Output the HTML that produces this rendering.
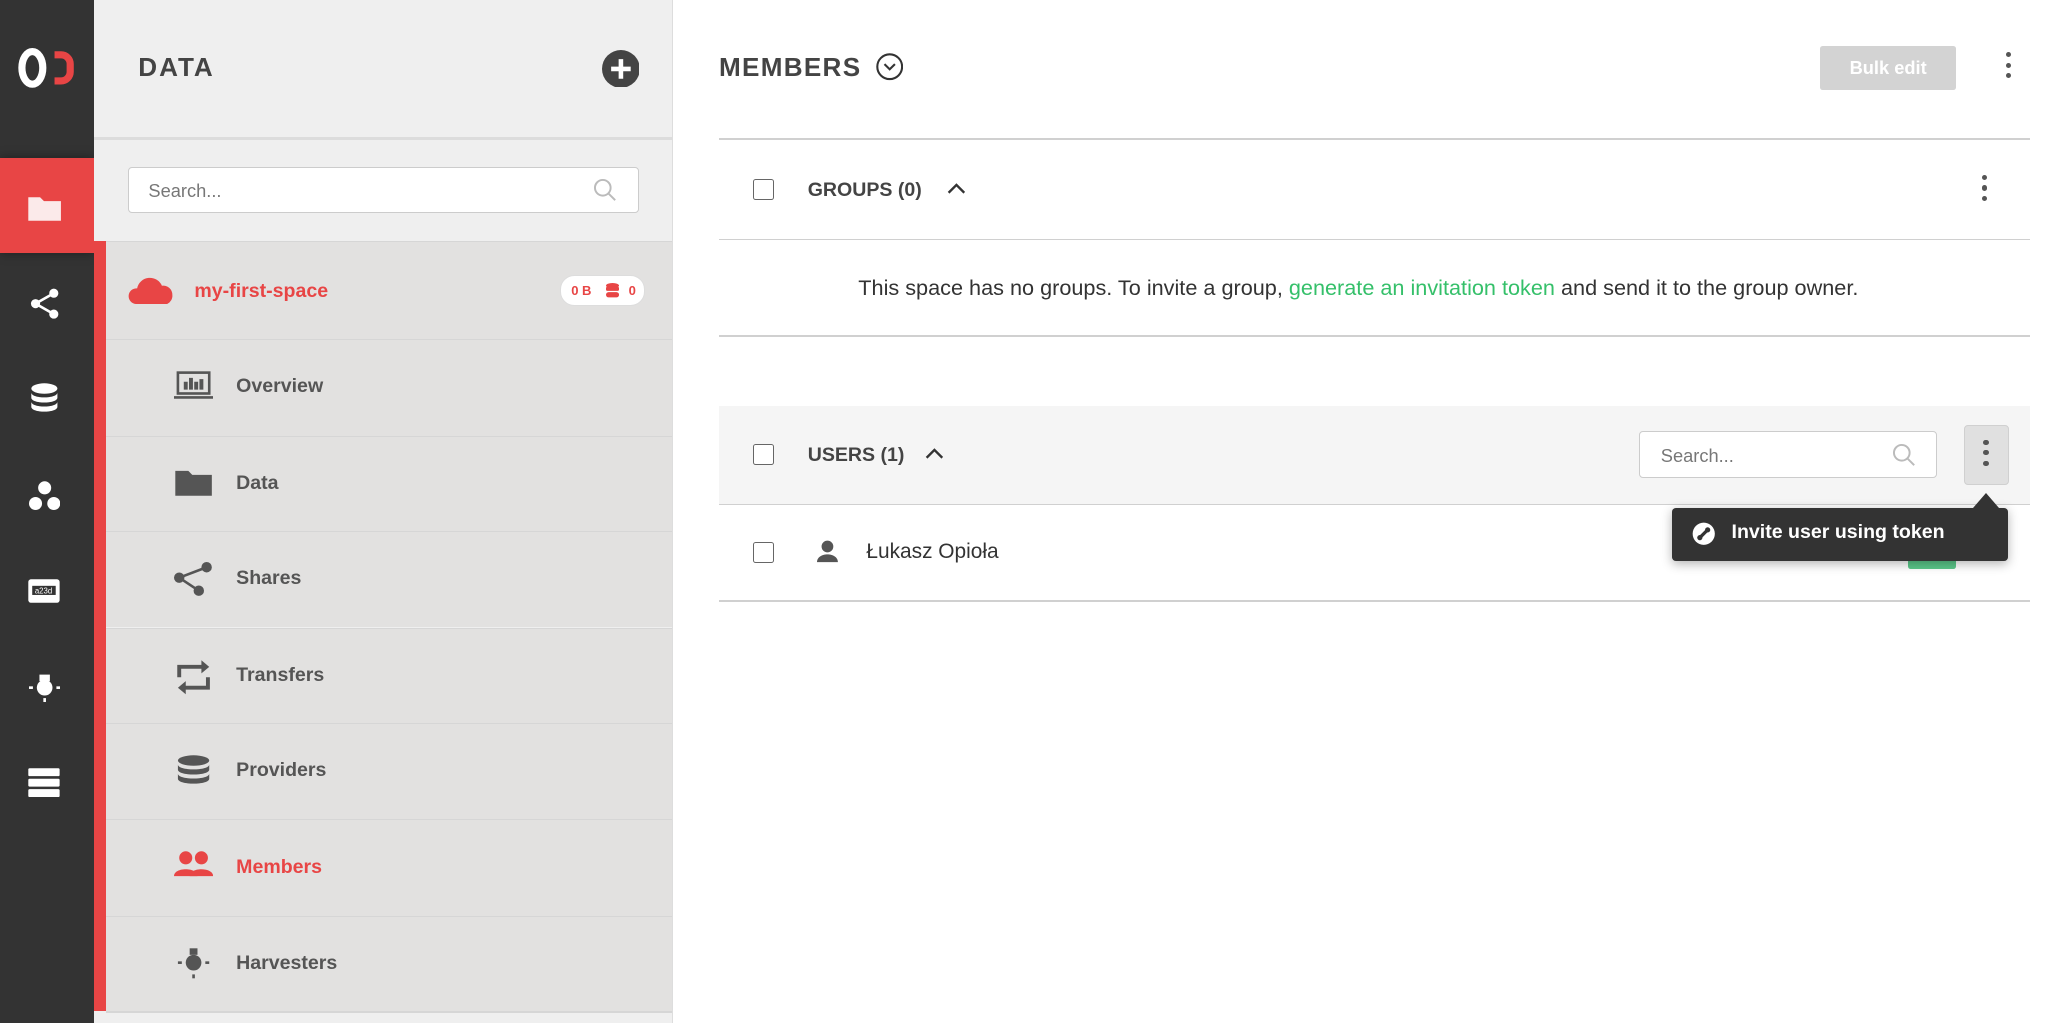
<!DOCTYPE html>
<html><head><meta charset="utf-8"><style>
html,body{margin:0;padding:0;overflow:hidden}
body{width:1568px;height:784px;zoom:1.30485;font-family:"Liberation Sans",sans-serif;color:#444;background:#fff;position:relative}
.a{position:absolute}
.nav{left:0;top:0;width:72px;height:784px;background:#333}
.col{left:72px;top:0;width:443px;height:784px;background:#efefef;border-right:1px solid #ddd}
.item{position:absolute;left:9px;width:434px;height:73px;background:#e2e1e0;border-top:1px solid #d6d6d6}
.item span{position:absolute;left:100px;top:27px;font-size:15px;font-weight:bold;color:#555}
.item svg{position:absolute;left:52px;top:23px}
.line{position:absolute;left:551px;width:1005px;height:1px;background:#d0d0d0}
.cb{position:absolute;width:15px;height:15px;border:1.5px solid #666;border-radius:2px;background:#fff}
.kb{position:absolute;width:4px}
.kb i{display:block;width:4px;height:4px;border-radius:2px;background:#555;margin-bottom:4px}
</style></head><body>
<div class="a nav">
 <svg class="a" style="left:14px;top:36px" width="44" height="32"><ellipse cx="11" cy="16" rx="8" ry="12.5" fill="none" stroke="#fff" stroke-width="5.5"/><path d="M28 6h5a7 7 0 0 1 7 7v6a7 7 0 0 1-7 7h-5" fill="none" stroke="#e84545" stroke-width="5.5"/></svg>
 <div class="a" style="left:0;top:121px;width:72px;height:73px;background:#e84545;box-shadow:0 0 8px rgba(0,0,0,.4)"></div>
 <svg class="a" style="left:21px;top:147px" width="28" height="24"><path d="M1 4h9l3 3h13v15H1z" fill="#fbeaea"/></svg>
 <svg class="a" style="left:22px;top:221px" width="24" height="24" fill="#fff"><circle cx="19" cy="4" r="3.5"/><circle cx="5" cy="12" r="3.5"/><circle cx="19" cy="20" r="3.5"/><path d="M5 12L19 4M5 12l14 8" stroke="#fff" stroke-width="2"/></svg>
 <svg class="a" style="left:23px;top:293px" width="22" height="26" fill="#fff"><ellipse cx="11" cy="5" rx="10" ry="4"/><path d="M1 8c0 5 20 5 20 0v4c0 5-20 5-20 0zM1 15c0 5 20 5 20 0v4c0 5-20 5-20 0z"/></svg>
 <svg class="a" style="left:22px;top:368px" width="24" height="24" fill="#fff"><circle cx="12" cy="6" r="5"/><circle cx="5" cy="18" r="5"/><circle cx="19" cy="18" r="5"/></svg>
 <svg class="a" style="left:21px;top:443px" width="26" height="20"><rect x="1" y="1" width="24" height="18" rx="2" fill="#fff"/><rect x="4" y="6" width="18" height="7" fill="#333"/><text x="6" y="12" font-size="6" fill="#fff" font-family="Liberation Sans">a23d</text></svg>
 <svg class="a" style="left:22px;top:515px" width="24" height="24" fill="#fff"><rect x="8" y="2" width="8" height="5"/><circle cx="12" cy="12" r="6"/><rect x="0" y="11" width="3" height="2"/><rect x="21" y="11" width="3" height="2"/><rect x="11" y="20" width="2" height="3"/></svg>
 <svg class="a" style="left:21px;top:588px" width="26" height="25" fill="#fff"><rect x="1" y="1" width="24" height="6" rx="1"/><rect x="1" y="9" width="24" height="6" rx="1"/><rect x="1" y="17" width="24" height="6" rx="1"/></svg>
</div>
<div class="a col">
 <div class="a" style="left:34px;top:40px;font-size:20px;font-weight:bold;letter-spacing:1.5px;color:#444">DATA</div>
 <svg class="a" style="left:389px;top:38px" width="29" height="29"><circle cx="14.5" cy="14.5" r="14.5" fill="#444"/><path d="M14.5 7v15M7 14.5h15" stroke="#fff" stroke-width="3.5"/></svg>
 <div class="a" style="left:0;top:105px;width:443px;height:2px;background:#dcdcdc"></div>
 <div class="a" style="left:26px;top:128px;width:390px;height:34px;background:#fff;border:1px solid #ccc;border-radius:3px"><span class="a" style="left:15px;top:9px;font-size:14px;color:#777">Search...</span>
  <svg class="a" style="left:356px;top:8px" width="18" height="18" fill="none" stroke="#bbb" stroke-width="1.5"><circle cx="7.5" cy="7.5" r="6"/><path d="M12 12l5 5"/></svg></div>
 <div class="a" style="left:0;top:185px;width:9px;height:590px;background:#e84545"></div>
 <div class="item" style="top:185px;height:74px;left:9px">
  <svg style="left:17px;top:24px" width="36" height="24"><path d="M6 23a6 6 0 0 1 1-12 10 10 0 0 1 19-2 7 7 0 0 1 8 7 7 7 0 0 1-4 7z" fill="#e84545"/></svg>
  <span style="left:68px;top:29px;color:#e84545">my-first-space</span>
  <div class="a" style="left:348px;top:25px;width:64px;height:22px;background:#fff;border-radius:11px;border:1px solid #ddd;font-size:10px;font-weight:bold;color:#e84545"><span class="a" style="left:8px;top:5px;font-size:10px;color:#e84545">0 B</span><svg class="a" style="left:35px;top:5px" width="10" height="12" fill="#e84545"><ellipse cx="5" cy="2" rx="5" ry="2"/><rect y="3" width="10" height="3" rx="1"/><rect y="7" width="10" height="4" rx="2"/></svg><span class="a" style="left:52px;top:5px;font-size:10px;color:#e84545">0</span></div>
 </div>
 <div class="item" style="top:260px"><svg width="30" height="22" fill="none" stroke="#555" stroke-width="2"><rect x="3" y="2" width="24" height="16"/><path d="M0 21h30" stroke-width="2"/><path d="M9 15V9M13 15V6M17 15V9M21 15V7" stroke-width="3"/></svg><span>Overview</span></div>
 <div class="item" style="top:334px"><svg width="30" height="24"><path d="M1 3h10l3 3h15v16H1z" fill="#555"/></svg><span>Data</span></div>
 <div class="item" style="top:407px"><svg width="30" height="26" fill="#555"><circle cx="25" cy="4" r="4"/><circle cx="4" cy="12" r="4"/><circle cx="19" cy="22" r="4"/><path d="M4 12L25 4M4 12l15 10" stroke="#555" stroke-width="2"/></svg><span>Shares</span></div>
 <div class="item" style="top:481px"><svg width="30" height="28" fill="none" stroke="#555" stroke-width="3"><path d="M4 14V6h20"/><path d="M21 1l6 5-6 5" fill="#555" stroke="none"/><path d="M26 14v8H6"/><path d="M9 17l-6 5 6 5" fill="#555" stroke="none"/></svg><span>Transfers</span></div>
 <div class="item" style="top:554px"><svg width="30" height="26" fill="#555"><ellipse cx="15" cy="5" rx="12" ry="4"/><path d="M3 8c0 5 24 5 24 0v4c0 5-24 5-24 0zM3 15c0 5 24 5 24 0v4c0 5-24 5-24 0z"/></svg><span>Providers</span></div>
 <div class="item" style="top:628px"><svg width="30" height="24" fill="#e84545"><circle cx="9" cy="6" r="5"/><path d="M0 20c0-7 18-7 18 0z"/><circle cx="21" cy="6" r="5"/><path d="M12 20c0-7 18-7 18 0z"/></svg><span style="color:#e84545">Members</span></div>
 <div class="item" style="top:702px"><svg width="30" height="26" fill="#555"><rect x="12" y="1" width="6" height="5"/><circle cx="15" cy="12" r="6"/><rect x="3" y="11" width="3" height="2"/><rect x="24" y="11" width="3" height="2"/><rect x="14" y="21" width="2" height="3"/></svg><span>Harvesters</span></div>
 <div class="a" style="left:9px;top:775px;width:434px;height:1px;background:#d6d6d6"></div>
</div>
<div class="a" style="left:551px;top:40px;font-size:20px;font-weight:bold;letter-spacing:1px;color:#444">MEMBERS</div>
<svg class="a" style="left:671px;top:41px" width="21" height="21" fill="none" stroke="#333" stroke-width="1.6"><circle cx="10.5" cy="10.5" r="9.5"/><path d="M6.5 8.5l4 4 4-4"/></svg>
<div class="a" style="left:1395px;top:35px;width:104px;height:34px;background:#d3d3d3;border-radius:2px;color:#fff;font-size:14px;font-weight:bold;text-align:center;line-height:34px">Bulk edit</div>
<div class="kb" style="left:1537px;top:40px"><i></i><i></i><i></i></div>
<div class="line" style="top:106px"></div>
<div class="cb" style="left:577px;top:137px"></div>
<div class="a" style="left:619px;top:137px;font-size:15px;font-weight:bold;color:#444">GROUPS (0)</div>
<svg class="a" style="left:725px;top:139px" width="16" height="12" fill="none" stroke="#333" stroke-width="1.8"><path d="M2 9l6-6 6 6"/></svg>
<div class="kb" style="left:1519px;top:134px"><i></i><i></i><i></i></div>
<div class="line" style="top:183px"></div>
<div class="a" style="left:551px;top:211px;width:980px;text-align:center;font-size:16.6px;color:#333;white-space:nowrap">This space has no groups. To invite a group, <span style="color:#35c06a">generate an invitation token</span> and send it to the group owner.</div>
<div class="line" style="top:257px"></div>
<div class="a" style="left:551px;top:311px;width:1005px;height:75px;background:#f5f5f5"></div>
<div class="cb" style="left:577px;top:340px"></div>
<div class="a" style="left:619px;top:340px;font-size:15px;font-weight:bold;color:#444">USERS (1)</div>
<svg class="a" style="left:708px;top:342px" width="16" height="12" fill="none" stroke="#333" stroke-width="1.8"><path d="M2 9l6-6 6 6"/></svg>
<div class="a" style="left:1256px;top:330px;width:227px;height:35px;background:#fff;border:1px solid #ccc;border-radius:3px"><span class="a" style="left:16px;top:10px;font-size:14px;color:#777">Search...</span>
 <svg class="a" style="left:193px;top:9px" width="18" height="18" fill="none" stroke="#bbb" stroke-width="1.5"><circle cx="7.5" cy="7.5" r="6"/><path d="M12 12l5 5"/></svg></div>
<div class="a" style="left:1505px;top:326px;width:33px;height:44px;background:#e0e0e0;border:1px solid #d0d0d0;border-radius:3px"></div>
<div class="kb" style="left:1520px;top:337px"><i></i><i></i><i></i></div>
<div class="line" style="top:386px"></div>
<div class="cb" style="left:577px;top:415px"></div>
<svg class="a" style="left:626px;top:414px" width="16" height="18" fill="#555"><circle cx="8" cy="5" r="4.5"/><path d="M0 17c0-8 16-8 16 0z"/></svg>
<div class="a" style="left:664px;top:414px;font-size:16px;color:#333">Łukasz Opioła</div>
<div class="a" style="left:1462px;top:424px;width:37px;height:12px;background:#5cc88a;border-radius:2px"></div>
<div class="line" style="top:460px"></div>
<div class="a" style="left:1281px;top:389px;width:258px;height:41px;background:#333;border-radius:3px;box-shadow:0 2px 8px rgba(0,0,0,.3)"></div>
<div class="a" style="left:1512px;top:378px;width:0;height:0;border-left:10px solid transparent;border-right:10px solid transparent;border-bottom:12px solid #333"></div>
<svg class="a" style="left:1297px;top:400px" width="18" height="18"><circle cx="9" cy="9" r="8.5" fill="#fff"/><path d="M5 13l8-8" stroke="#333" stroke-width="2.5"/><circle cx="6" cy="12" r="2" fill="#333"/><circle cx="12" cy="6" r="2" fill="#333"/></svg>
<div class="a" style="left:1327px;top:399px;font-size:15px;font-weight:bold;color:#fff">Invite user using token</div>
</body></html>
